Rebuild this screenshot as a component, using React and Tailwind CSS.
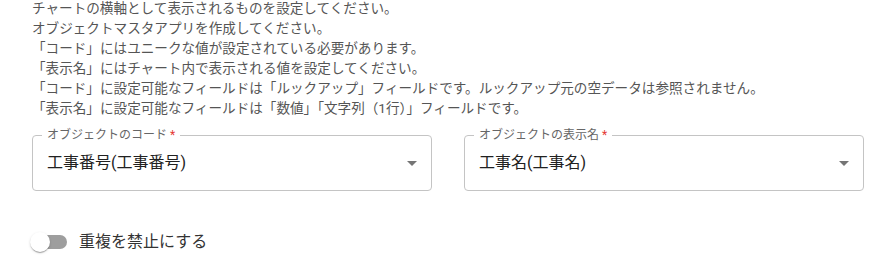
const lines = [
  'チャートの横軸として表示されるものを設定してください。',
  'オブジェクトマスタアプリを作成してください。',
  '「コード」にはユニークな値が設定されている必要があります。',
  '「表示名」にはチャート内で表示される値を設定してください。',
  '「コード」に設定可能なフィールドは「ルックアップ」フィールドです。ルックアップ元の空データは参照されません。',
  '「表示名」に設定可能なフィールドは「数値」「文字列（1行）」フィールドです。',
];

function SelectField({ label, value }) {
  return (
    <div className="relative w-[400px] h-[56px] rounded-[4px] border border-[#c4c4c4] bg-white">
      <span className="absolute left-[9px] top-[-8px] bg-white px-[5px] text-[12px] leading-[15px] text-[#666]">
        {label}
        <span className="text-[#e53935]"> *</span>
      </span>
      <div className="flex h-full items-center pl-[14px] pr-[32px] text-[16px] text-[#212121]">
        {value}
      </div>
      <svg
        className="absolute right-[7px] top-[15px] h-6 w-6 fill-[#757575]"
        viewBox="0 0 24 24"
      >
        <path d="M7 10l5 5 5-5z" />
      </svg>
    </div>
  );
}

export default function App() {
  return (
    <div
      className="w-[890px] h-[277px] overflow-hidden bg-white"
      style={{ fontFamily: 'Roboto, "Noto Sans CJK JP", sans-serif' }}
    >
      <div className="-mt-[2px] pl-8 text-[13.6px] leading-[20px] text-[#555]">
        {lines.map((l, i) => (
          <div key={i}>{l}</div>
        ))}
      </div>

      <div className="mt-[17px] flex gap-8 pl-8">
        <SelectField label="オブジェクトのコード" value="工事番号(工事番号)" />
        <SelectField label="オブジェクトの表示名" value="工事名(工事名)" />
      </div>

      <div className="mt-[32px] flex items-center pl-[21px]">
        <div className="relative h-[38px] w-[58px] p-[12px]">
          <div className="h-[14px] w-[34px] rounded-[7px] bg-[#9e9e9e]" />
          <div className="absolute left-[9px] top-[9px] h-5 w-5 rounded-full bg-white shadow-[0_2px_1px_-1px_rgba(0,0,0,0.2),0_1px_1px_0_rgba(0,0,0,0.14),0_1px_3px_0_rgba(0,0,0,0.12)]" />
        </div>
        <span className="text-[16px] text-[#333]">重複を禁止にする</span>
      </div>
    </div>
  );
}
